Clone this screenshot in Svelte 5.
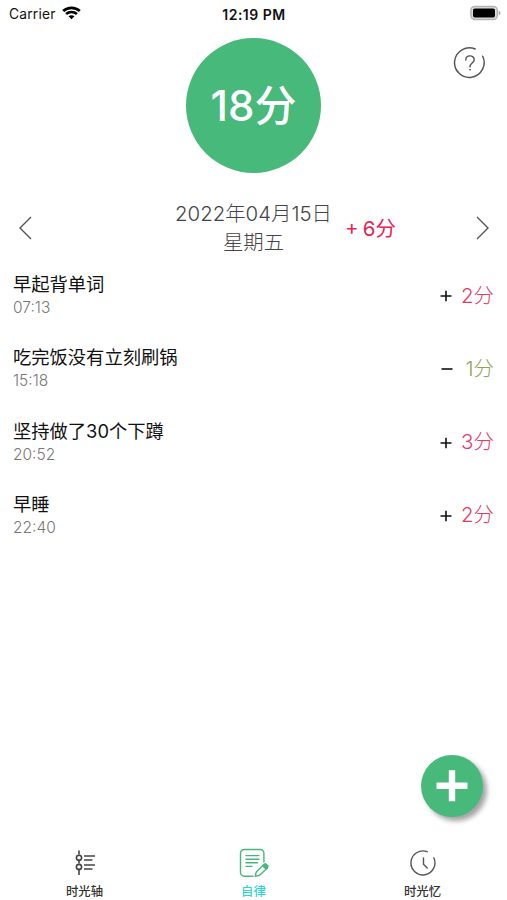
<script>
  const entries = [
    { title: '早起背单词', time: '07:13', sign: '+', score: 2 },
    { title: '吃完饭没有立刻刷锅', time: '15:18', sign: '−', score: 1 },
    { title: '坚持做了30个下蹲', time: '20:52', sign: '+', score: 3 },
    { title: '早睡', time: '22:40', sign: '+', score: 2 }
  ];
</script>

<div class="screen">
  <header class="status">
    <div class="carrier">
      <span>Carrier</span>
      <svg width="19" height="14" viewBox="0 0 19 14" fill="none" stroke="#000" stroke-width="2.7">
        <path d="M1.2 5.1C5.8.7 13.2.7 17.8 5.1M4.1 8.1c3-2.8 7.8-2.8 10.8 0" />
        <path d="M6.5 10.3c1.7-1.5 4.3-1.5 6 0l-3 3z" fill="#000" stroke="none" />
      </svg>
    </div>
    <div class="clock">12:19 PM</div>
    <div class="battery">
      <svg width="31" height="16" viewBox="0 0 31 16">
        <rect x=".9" y="1.4" width="26.4" height="13.2" rx="4" fill="#ddd" stroke="#b3b3b3" stroke-width="1.5" />
        <rect x="3" y="3.5" width="22" height="9" rx="1.8" fill="#000" />
        <path d="M28.7 5.5q1.8 1 1.8 2.5t-1.8 2.5z" fill="#aaa" />
      </svg>
    </div>
  </header>

  <section class="summary">
    <div class="total">18分</div>
    <button class="help" aria-label="帮助">
      <svg width="34" height="34" viewBox="0 0 34 34" fill="none" stroke="#555" stroke-width="1.45" stroke-linecap="round">
        <path d="M22.2 3A14.8 14.8 0 1 0 29.7 10.2" />
        <path d="M12.8 13.9c0-5.4 8.4-5.3 8.4-.2 0 3.4-4.2 3.3-4.2 7" />
        <circle cx="17" cy="23.7" r=".55" fill="#555" stroke-width=".7" />
      </svg>
    </button>
  </section>

  <nav class="day">
    <button aria-label="前一天">
      <svg width="14" height="24" viewBox="0 0 14 24" fill="none" stroke="#555" stroke-width="1.4"><path d="M13 1 2 12l11 11" /></svg>
    </button>
    <div class="date"><div>2022年04月15日</div><div>星期五</div></div>
    <div class="delta">+ 6分</div>
    <button aria-label="后一天">
      <svg width="14" height="24" viewBox="0 0 14 24" fill="none" stroke="#555" stroke-width="1.4"><path d="m2 1 11 11-11 11" /></svg>
    </button>
  </nav>

  <main>
    {#each entries as entry}
      <article>
        <div>
          <h2>{entry.title}</h2>
          <time>{entry.time}</time>
        </div>
        <div class="points">
          <svg width="12" height="12" viewBox="0 0 12 12" stroke="#111" stroke-width="1.6">
            <path d={entry.sign === '+' ? 'M.5 6h11M6 .7v10.6' : 'M.5 6h11'} />
          </svg>
          <span class:minus={entry.sign !== '+'}>{entry.score}分</span>
        </div>
      </article>
    {/each}
  </main>

  <button class="add" aria-label="添加">
    <svg width="32" height="32" viewBox="0 0 32 32" stroke="#fff" stroke-width="6.4"><path d="M.5 15.7h31M16 .2v31" /></svg>
  </button>

  <footer>
    <div class="tab">
      <svg width="30" height="30" viewBox="0 0 30 30" fill="none" stroke="#444" stroke-width="1.6">
        <path d="M9 2.5v4m0 5v4m0 5v6.5M14 8h11M14 12h8.5M14 17h11M14 21h8.5" />
        <circle cx="9" cy="9.8" r="2.6" /><circle cx="9" cy="19" r="2.6" />
      </svg>
      <span>时光轴</span>
    </div>
    <div class="tab active">
      <svg width="30" height="30" viewBox="0 0 30 30" fill="none" stroke="#45b87a" stroke-width="1.4" stroke-linecap="round" stroke-linejoin="round">
        <path d="M14 28.2H5.2a3.7 3.7 0 0 1-3.7-3.7V5.2a3.7 3.7 0 0 1 3.7-3.7h16a3.7 3.7 0 0 1 3.7 3.7V14" />
        <path d="M7 7.6h13M7 11.2h13M7 14.8h11.5M7 18.4h6" />
        <path d="m16.2 28.4 1-4.4 7.8-7.5 3.4 3.4-7.8 7.4z" />
        <path d="m23.8 17.7 1.6-1.5q1-.8 2 .2l1.1 1.1q.9 1 0 2l-1.5 1.5z" fill="#45b87a" />
      </svg>
      <span>自律</span>
    </div>
    <div class="tab">
      <svg width="30" height="30" viewBox="0 0 30 30" fill="none" stroke="#555" stroke-width="1.4" stroke-linecap="round">
        <path d="M19.2 3.7A12 12 0 1 0 25.8 9.8M15.5 10v6.2l3.7 3.7" />
      </svg>
      <span>时光忆</span>
    </div>
  </footer>
</div>

<style>
  :global(body) { margin: 0; background: #fff; }
  .screen {
    position: relative;
    width: 507px;
    height: 900px;
    display: flex;
    flex-direction: column;
    overflow: hidden;
    background: #fff;
    color: #111;
    font-family: Inter, "Noto Sans CJK SC", sans-serif;
  }
  button { border: 0; padding: 0; background: none; display: flex; }
  svg { display: block; flex: none; }
  .status {
    height: 28px;
    flex: none;
    display: grid;
    grid-template-columns: 1fr auto 1fr;
    align-items: center;
    padding: 0 6px 0 9px;
    box-sizing: border-box;
    font-size: 13.8px;
  }
  .carrier { display: flex; align-items: center; gap: 6px; letter-spacing: .2px; }
  .carrier svg { margin-top: -3px; }
  .clock { font-weight: 600; font-size: 14px; margin-left: -2px; letter-spacing: .5px; }
  .battery { justify-self: end; margin-top: -2px; }
  .summary { position: relative; height: 162px; flex: none; display: flex; justify-content: center; padding-top: 10px; box-sizing: border-box; }
  .total {
    width: 135px;
    height: 135px;
    border-radius: 50%;
    background: #46b97b;
    color: #fff;
    display: flex;
    align-items: center;
    justify-content: center;
    font-size: 42px;
    font-weight: 500;
    line-height: 1;
  }
  .help { position: absolute; left: 453px; top: 18px; }
  .day {
    height: 75px;
    flex: none;
    display: grid;
    grid-template-columns: 156px 159px 1fr 14px;
    align-items: center;
    padding: 0 18px;
    box-sizing: border-box;
  }
  .date { text-align: center; font-size: 20.4px; line-height: 29px; font-weight: 300; color: #444; white-space: nowrap; }
  .delta { font-size: 20.5px; color: #e82453; padding: 2px 0 0 12px; line-height: 29px; word-spacing: -1.5px; }
  main { flex: 1; }
  article { height: 73.3px; display: flex; justify-content: space-between; padding: 6px 13px 0; box-sizing: border-box; }
  h2 { margin: 0; font-size: 18.3px; line-height: 27px; font-weight: 400; color: #111; }
  time { display: block; font-size: 15.5px; line-height: 20px; font-weight: 350; color: #777; }
  .points { display: flex; align-items: center; gap: 9px; height: 45px; font-size: 20.5px; font-weight: 300; color: #e33c65; }
  .points svg { margin: 5px 0 0 1px; }
  .points .minus { color: #8fa457; padding-left: 3px; }
  .add {
    position: absolute;
    left: 421px;
    top: 754.5px;
    width: 62px;
    height: 62px;
    border-radius: 50%;
    background: #46b97b;
    align-items: center;
    justify-content: center;
    box-shadow: 4px 4px 5px #0000005c;
  }
  footer { height: 52px; flex: none; display: grid; grid-template-columns: repeat(3, 1fr); }
  .tab { display: flex; flex-direction: column; align-items: center; color: #333; }
  .tab span { font-size: 12.4px; line-height: 18px; font-weight: 500; margin-top: 5px; }
  .tab.active span { color: #31d5cf; }
</style>
